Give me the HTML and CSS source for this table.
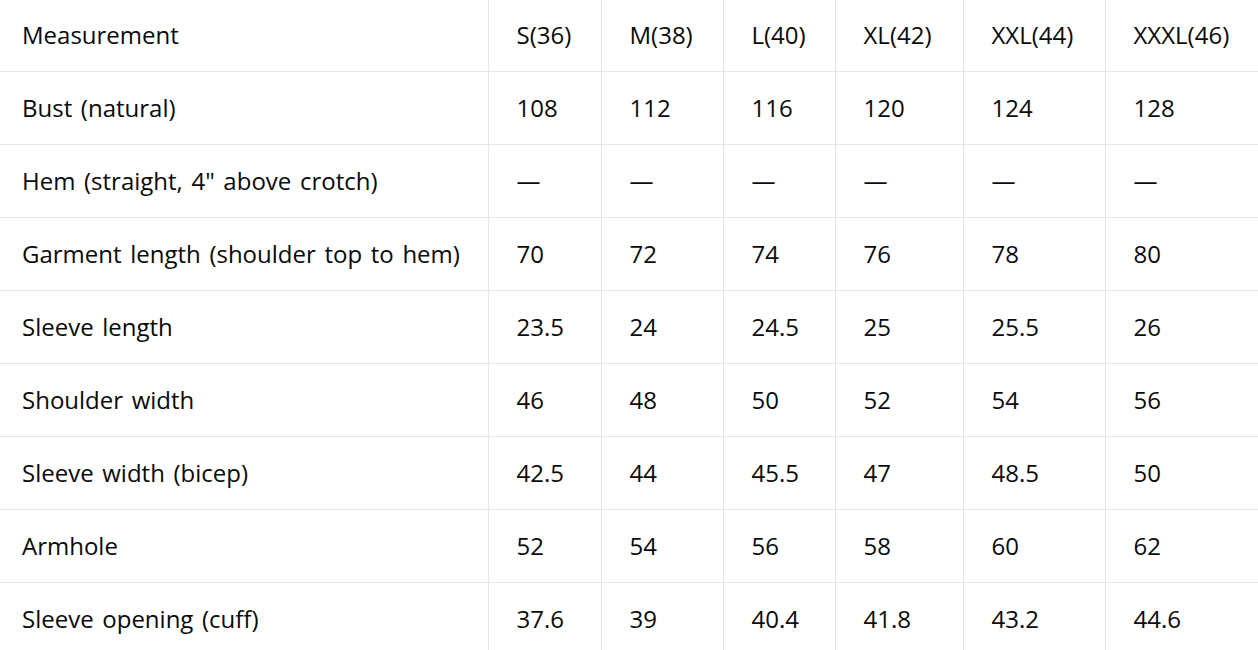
FILE: index.html
```html
<!DOCTYPE html>
<html lang="en">
<head>
<meta charset="utf-8">
<title>Size chart</title>
<link rel="stylesheet" href="styles.css">
</head>
<body>
<table class="size-table">
  <colgroup>
    <col class="c-label">
    <col class="c-s">
    <col class="c-m">
    <col class="c-l">
    <col class="c-xl">
    <col class="c-xxl">
    <col class="c-xxxl">
  </colgroup>
  <thead>
    <tr>
      <th>Measurement</th><th>S(36)</th><th>M(38)</th><th>L(40)</th><th>XL(42)</th><th>XXL(44)</th><th>XXXL(46)</th>
    </tr>
  </thead>
  <tbody>
    <tr><td>Bust (natural)</td><td>108</td><td>112</td><td>116</td><td>120</td><td>124</td><td>128</td></tr>
    <tr><td>Hem (straight, 4" above crotch)</td><td>—</td><td>—</td><td>—</td><td>—</td><td>—</td><td>—</td></tr>
    <tr><td>Garment length (shoulder top to hem)</td><td>70</td><td>72</td><td>74</td><td>76</td><td>78</td><td>80</td></tr>
    <tr><td>Sleeve length</td><td>23.5</td><td>24</td><td>24.5</td><td>25</td><td>25.5</td><td>26</td></tr>
    <tr><td>Shoulder width</td><td>46</td><td>48</td><td>50</td><td>52</td><td>54</td><td>56</td></tr>
    <tr><td>Sleeve width (bicep)</td><td>42.5</td><td>44</td><td>45.5</td><td>47</td><td>48.5</td><td>50</td></tr>
    <tr><td>Armhole</td><td>52</td><td>54</td><td>56</td><td>58</td><td>60</td><td>62</td></tr>
    <tr><td>Sleeve opening (cuff)</td><td>37.6</td><td>39</td><td>40.4</td><td>41.8</td><td>43.2</td><td>44.6</td></tr>
  </tbody>
</table>
</body>
</html>
```
FILE: styles.css
```css
html, body {
  margin: 0;
  padding: 0;
  background: #ffffff;
  overflow: hidden;
}

.size-table {
  border-collapse: collapse;
  table-layout: fixed;
  width: 1270px;
  font-family: "Open Sans", "Noto Sans", "Liberation Sans", sans-serif;
  font-size: 24px;
  word-spacing: 2.4px;
  color: #0a0a0a;
}

.c-label { width: 488px; }
.c-s { width: 113px; }
.c-m { width: 122px; }
.c-l { width: 112px; }
.c-xl { width: 128px; }
.c-xxl { width: 142px; }
.c-xxxl { width: 165px; }

.size-table th,
.size-table td {
  text-align: left;
  font-weight: 400;
  vertical-align: middle;
  white-space: nowrap;
  padding: 0 0 0 28px;
  height: 72px;
  line-height: 1.2;
  border-bottom: 1px solid #e6e6e6;
  border-left: 1px solid #e6e6e6;
}

.size-table th {
  height: 71px;
}

.size-table th:first-child,
.size-table td:first-child {
  padding-left: 22px;
  border-left: none;
}
```
